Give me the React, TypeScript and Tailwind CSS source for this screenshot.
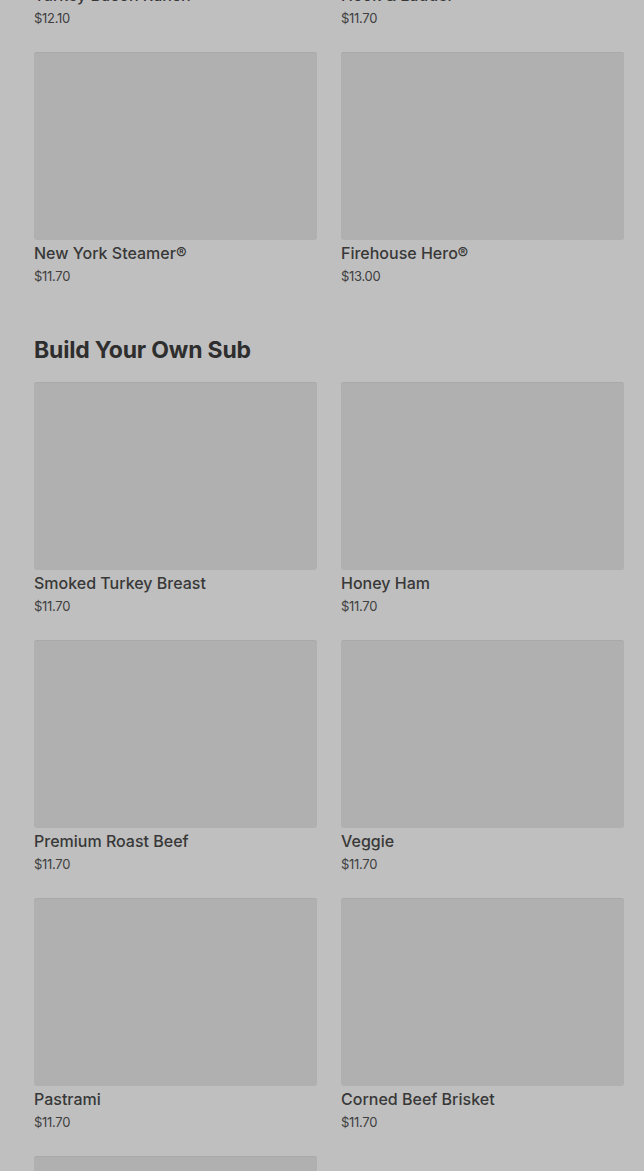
import React from 'react';

type Item = { name: string; price: string };

const topItems: Item[] = [
	{ name: 'Turkey Bacon Ranch™', price: '$12.10' },
	{ name: 'Hook & Ladder®', price: '$11.70' },
	{ name: 'New York Steamer®', price: '$11.70' },
	{ name: 'Firehouse Hero®', price: '$13.00' },
];

const buildItems: Item[] = [
	{ name: 'Smoked Turkey Breast', price: '$11.70' },
	{ name: 'Honey Ham', price: '$11.70' },
	{ name: 'Premium Roast Beef', price: '$11.70' },
	{ name: 'Veggie', price: '$11.70' },
	{ name: 'Pastrami', price: '$11.70' },
	{ name: 'Corned Beef Brisket', price: '$11.70' },
	{ name: 'Meatball', price: '$11.70' },
];

function MenuCard({ item }: { item: Item }) {
	return (
		<div className="flex flex-col">
			<div className="h-[188px] w-full rounded-[3px] bg-[#b0b0b0] shadow-[inset_0_1px_0_#a9a9a9]" />
			<div className="mt-[1px] text-[16px] leading-6 font-medium text-[#383838]">
				{item.name}
			</div>
			<div className="mt-[1px] text-[13px] leading-5 text-[#404040] tracking-[-0.3px]">
				{item.price}
			</div>
		</div>
	);
}

export default function App() {
	return (
		<div
			className="min-h-[1171px] h-[1171px] overflow-hidden bg-[#bfbfbf]"
			style={{ fontFamily: 'Inter, "Liberation Sans", sans-serif' }}
		>
			<div className="-mt-[206px] pl-[34px] pr-[20px]">
				{/* Signature subs (scrolled) */}
				<div className="grid grid-cols-2 gap-x-6 gap-y-6">
					{topItems.map((item) => (
						<MenuCard key={item.name} item={item} />
					))}
				</div>

				{/* Build Your Own Sub */}
				<h2 className="mt-[50px] mb-[18px] text-[23px] leading-7 font-bold tracking-[-0.2px] text-[#2e2e2e]">
					Build Your Own Sub
				</h2>
				<div className="grid grid-cols-2 gap-x-6 gap-y-6">
					{buildItems.map((item) => (
						<MenuCard key={item.name} item={item} />
					))}
				</div>
			</div>
		</div>
	);
}
